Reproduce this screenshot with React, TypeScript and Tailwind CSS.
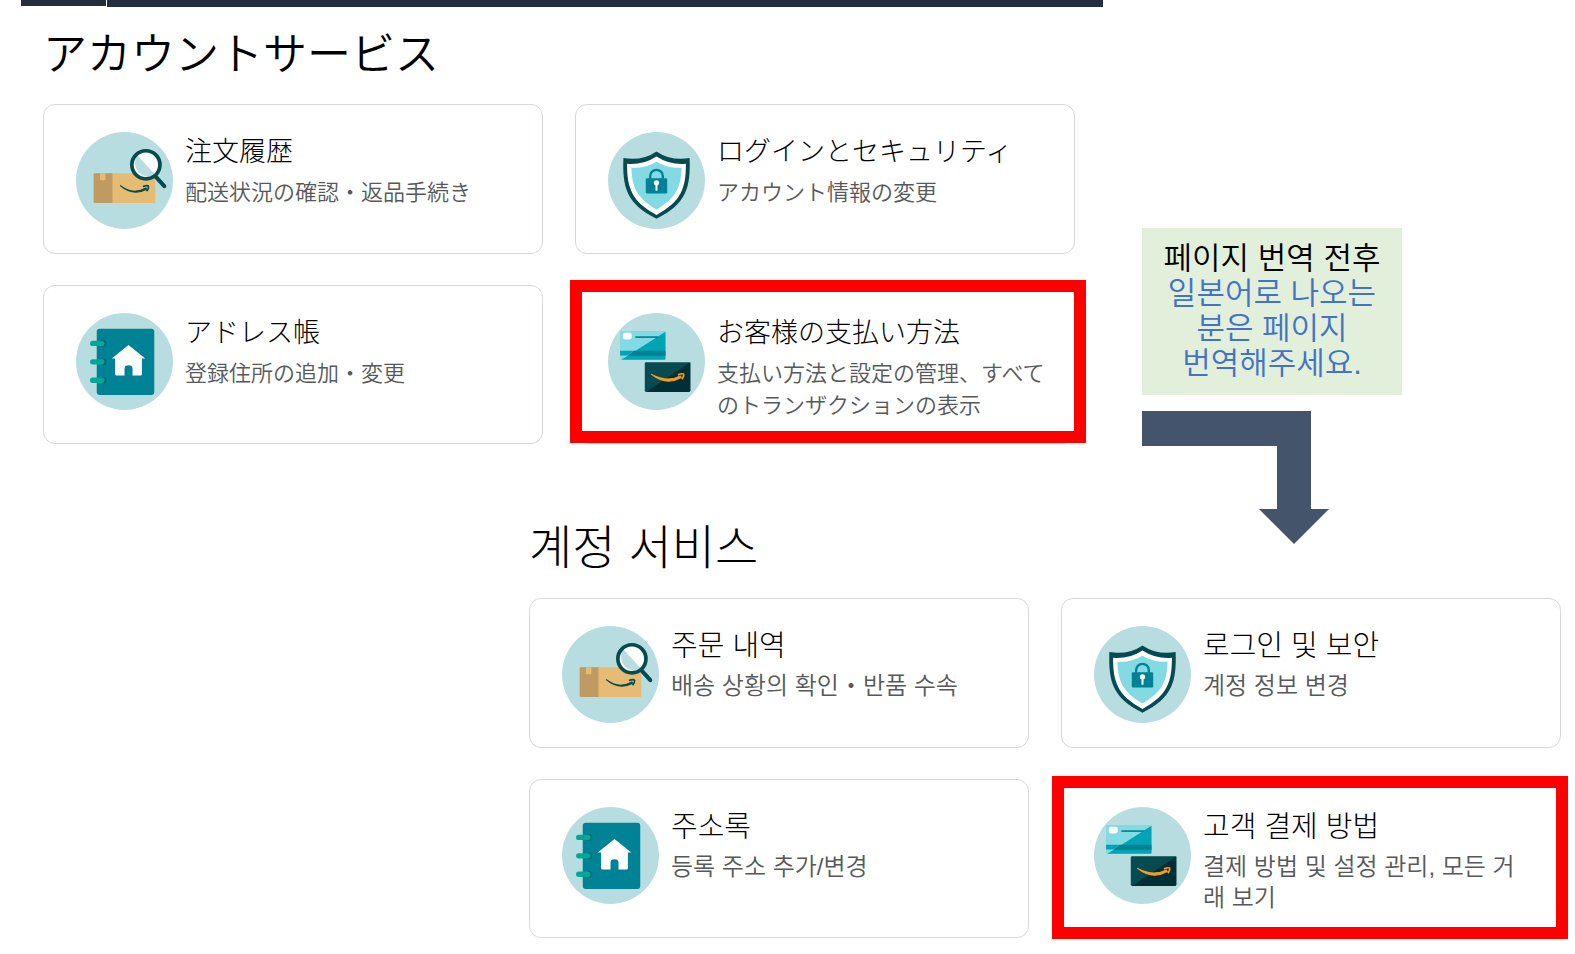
import type { ReactNode } from 'react';
import clsx from 'clsx';

type IconName = 'orders' | 'security' | 'addresses' | 'payments';

interface Service { icon: IconName; title: string; desc: string; frame?: string }

const JA_SERVICES: Service[] = [
  { icon: 'orders',    title: '注文履歴',               desc: '配送状況の確認・返品手続き' },
  { icon: 'security',  title: 'ログインとセキュリティ', desc: 'アカウント情報の変更' },
  { icon: 'addresses', title: 'アドレス帳',             desc: '登録住所の追加・変更' },
  { icon: 'payments',  title: 'お客様の支払い方法',     desc: '支払い方法と設定の管理、すべてのトランザクションの表示', frame: '-top-1.5 -left-1.5 -right-3 bottom-0' },
];

const KO_SERVICES: Service[] = [
  { icon: 'orders',    title: '주문 내역',      desc: '배송 상황의 확인・반품 수속' },
  { icon: 'security',  title: '로그인 및 보안', desc: '계정 정보 변경' },
  { icon: 'addresses', title: '주소록',         desc: '등록 주소 추가/변경' },
  { icon: 'payments',  title: '고객 결제 방법', desc: '결제 방법 및 설정 관리, 모든 거래 보기', frame: '-top-1 -left-2.5 -right-2 -bottom-0.5' },
];

const ICONS: Record<IconName, ReactNode> = {
  orders: (
    <>
      <circle cx="162" cy="165" r="145" fill="#b8dde0" />
      <rect x="70" y="143" width="184" height="89" rx="3" fill="#e6bc75" />
      <path d="M73 143h53v89H73q-3 0-3-3v-83q0-3 3-3z" fill="#bf9b61" />
      <path d="M89 143h16v20q-8 3-16 0z" fill="#e6bc75" />
      <path d="M149 180q38 30 77 7l2 4q-40 22-79-11z" fill="#054b50" stroke="#054b50" strokeWidth="3" />
      <path d="M217 183q15-5 17 0 1 5-6 14" fill="none" stroke="#054b50" strokeWidth="5" />
      <path d="M256 154l25 28" stroke="#054b50" strokeWidth="12" strokeLinecap="round" />
      <circle cx="226" cy="118" r="42" fill="#fff" />
      <path d="M200 89l55 60a42 42 0 0 1-55-60z" fill="#b8dde0" />
      <circle cx="226" cy="118" r="42" fill="none" stroke="#054b50" strokeWidth="11" />
    </>
  ),
  security: (
    <>
      <circle cx="162" cy="165" r="145" fill="#b8dde0" />
      <path d="M162 78q-42 29-99 20c-3 86 8 137 99 181 91-44 102-95 99-181q-57 9-99-20z" fill="#054b50" />
      <path d="M162 93q-40 26-88 22c0 70 12 112 88 153 76-41 88-83 88-153q-48 4-88-22z" fill="#fff" />
      <path d="M162 109q-31 20-75 18c2 57 14 89 75 125 61-36 73-68 75-125q-44 2-75-18z" fill="#83dae3" />
      <path d="M143 160v-8a19 19 0 0 1 38 0v8" fill="none" stroke="#008296" strokeWidth="7" />
      <rect x="130" y="158" width="64" height="46" rx="4" fill="#008296" />
      <circle cx="162" cy="172" r="8" fill="#fff" />
      <rect x="159" y="173" width="6" height="23" rx="2" fill="#fff" />
    </>
  ),
  addresses: (
    <>
      <circle cx="162" cy="165" r="145" fill="#b8dde0" />
      <rect x="79" y="67" width="172" height="198" rx="9" fill="#008296" />
      <g fill="#006b78">
        <circle cx="98" cy="111" r="10" />
        <circle cx="98" cy="166" r="10" />
        <circle cx="98" cy="221" r="10" />
      </g>
      <g fill="#00a996">
        <rect x="59" y="103" width="43" height="16" rx="8" />
        <rect x="59" y="158" width="43" height="16" rx="8" />
        <rect x="59" y="213" width="43" height="16" rx="8" />
      </g>
      <path d="M174 116l50 40h-10v47q0 4-4 4h-24v-21q0-10-12-10t-12 10v21h-24q-4 0-4-4v-47h-10z" fill="#fff" />
    </>
  ),
  payments: (
    <>
      <circle cx="162" cy="165" r="145" fill="#b8dde0" />
      <rect x="53" y="74" width="136" height="86" rx="4" fill="#83dae3" />
      <path d="M189 76v80q0 4-4 4H57z" fill="#00a5b5" />
      <path d="M53 133h41l-19 14H53z" fill="#00a4b4" />
      <path d="M94 133h95v15H75z" fill="#008296" />
      <rect x="61" y="79" width="27" height="20" rx="7" fill="#fff" />
      <path d="M99 92h67" stroke="#008296" strokeWidth="5" />
      <path d="M166 92h14" stroke="#00a0b0" strokeWidth="4" />
      <rect x="127" y="167" width="136" height="89" rx="4" fill="#054b50" />
      <path d="M263 167v85q0 4-4 4H131z" fill="#002f36" />
      <path d="M146 203q49 26 87 5l3 5q-45 26-90-10z" fill="#f79d20" stroke="#f79d20" strokeWidth="3" />
      <path d="M226 205q14-5 17-2 2 5-5 15" fill="none" stroke="#f79d20" strokeWidth="5" />
    </>
  ),
};

function ServiceCard({ service, titleClass, descClass }: { service: Service; titleClass: string; descClass: string }) {
  return (
    <a href="#" className="relative flex gap-3 min-h-[150px] pt-[27px] pb-6 pl-8 pr-5 rounded-xl border border-[#d5d9d9] bg-white">
      <svg viewBox="17 20 290 290" className="size-[97px] shrink-0" aria-hidden="true">{ICONS[service.icon]}</svg>
      <div className="min-w-0">
        <h2 className={clsx('font-light text-black', titleClass)}>{service.title}</h2>
        <p className={clsx('text-[#565959] break-all', descClass)}>{service.desc}</p>
      </div>
      {service.frame && <span className={clsx('absolute border-12 border-[#ff0000]', service.frame)} />}
    </a>
  );
}

function TranslateNote() {
  return (
    <aside lang="ko" className="col-start-3 row-start-1 row-span-2 pt-[221px] pl-[67px] font-['Liberation_Sans','Noto_Sans_CJK_KR',sans-serif] font-[350]">
      <div className="w-[260px] h-[167px] pt-[13px] bg-[#e2efda] text-center text-[31px] leading-[35px] text-[#4472c4]">
        <p className="text-black">페이지 번역 전후</p>
        <p>일본어로 나오는<br />분은 페이지<br />번역해주세요.</p>
      </div>
      <svg viewBox="0 0 188 134" className="mt-4 w-[188px] h-[134px]" aria-hidden="true">
        <path d="M0 0h169v98h18l-35 35-35-35h18V35H0z" fill="#44546a" />
      </svg>
    </aside>
  );
}

export default function App() {
  return (
    <main className="min-h-screen bg-white">
      <div className="flex items-start gap-px pl-[21px] pr-[30%] h-[7px]">
        <div className="w-[85px] h-1.5 bg-[#232f3e]" />
        <div className="flex-1 h-[7px] bg-[#232f3e]" />
      </div>
      <div className="grid grid-cols-[486fr_546fr_486fr] items-start pl-[43px] pr-3.5">
        <section lang="ja" className="col-start-1 col-span-2 row-start-1 pt-3 font-['Noto_Sans_CJK_JP',sans-serif] font-[350]">
          <h1 className="text-[44px] leading-[64px] text-black">アカウントサービス</h1>
          <div className="mt-[21px] grid grid-cols-2 gap-x-8 gap-y-[31px]">
            {JA_SERVICES.map(s => (
              <ServiceCard key={s.icon} service={s} titleClass="text-[27px] leading-9" descClass="mt-1.5 text-[22px] leading-8" />
            ))}
          </div>
        </section>

        <TranslateNote />

        <section lang="ko" className="col-start-2 col-span-2 row-start-2 pt-[72px] font-['Liberation_Sans','Noto_Sans_CJK_KR',sans-serif] font-[350]">
          <h1 className="text-[47px] leading-[64px] font-light text-black">계정 서비스</h1>
          <div className="mt-[18px] grid grid-cols-2 gap-x-8 gap-y-[31px]">
            {KO_SERVICES.map(s => (
              <ServiceCard key={s.icon} service={s} titleClass="text-[29px] leading-10" descClass="mt-1 pr-4 text-[24px] leading-[31px]" />
            ))}
          </div>
        </section>
      </div>
    </main>
  );
}
